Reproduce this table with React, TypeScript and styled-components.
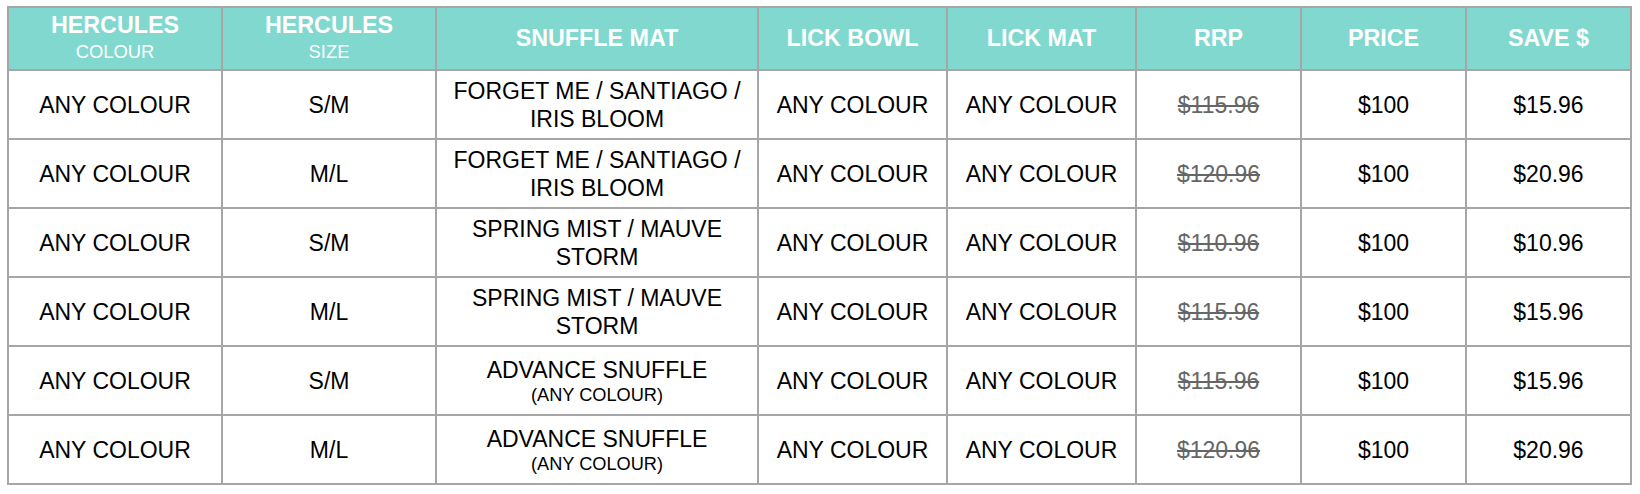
import React from "react";
import styled, { createGlobalStyle } from "styled-components";

const GlobalStyle = createGlobalStyle`
  html, body {
    margin: 0;
    padding: 0;
    background: #ffffff;
  }
  body {
    font-family: "Liberation Sans", Arial, Helvetica, sans-serif;
    color: #000000;
  }
`;

const Page = styled.div`
  padding: 6px 0 0 7px;
`;

const Table = styled.table`
  width: 1625px;
  table-layout: fixed;
  border-collapse: collapse;
  font-family: "Liberation Sans", Arial, Helvetica, sans-serif;
`;

const HeadRow = styled.tr`
  height: 63px;
  background: #81d8cf;
`;

const BodyRow = styled.tr`
  height: 69px;
  background: #ffffff;
`;

const HeadCell = styled.th`
  border: 2px solid #a6a6a6;
  padding: 0 10px;
  color: #ffffff;
  font-size: 23.3px;
  font-weight: 700;
  line-height: 26.4px;
  text-align: center;
  vertical-align: middle;
`;

const HeadSub = styled.span`
  display: block;
  font-size: 18.4px;
  font-weight: 400;
  line-height: 26.4px;
`;

const Cell = styled.td`
  border: 2px solid #a6a6a6;
  padding: 0 10px;
  font-size: 23px;
  line-height: 28px;
  text-align: center;
  vertical-align: middle;
  color: #000000;
`;

const Struck = styled.span`
  color: #666666;
  text-decoration: line-through;
`;

const Note = styled.div`
  font-size: 18.2px;
  line-height: 22px;
`;

type Row = {
  size: string;
  mat: string;
  note?: string;
  rrp: string;
  save: string;
};

const widths = [214, 214, 322, 189, 189, 165, 165, 165];

const headers: { title: string; sub?: string }[] = [
  { title: "HERCULES", sub: "COLOUR" },
  { title: "HERCULES", sub: "SIZE" },
  { title: "SNUFFLE MAT" },
  { title: "LICK BOWL" },
  { title: "LICK MAT" },
  { title: "RRP" },
  { title: "PRICE" },
  { title: "SAVE $" },
];

const rows: Row[] = [
  { size: "S/M", mat: "FORGET ME / SANTIAGO / IRIS BLOOM", rrp: "$115.96", save: "$15.96" },
  { size: "M/L", mat: "FORGET ME / SANTIAGO / IRIS BLOOM", rrp: "$120.96", save: "$20.96" },
  { size: "S/M", mat: "SPRING MIST / MAUVE STORM", rrp: "$110.96", save: "$10.96" },
  { size: "M/L", mat: "SPRING MIST / MAUVE STORM", rrp: "$115.96", save: "$15.96" },
  { size: "S/M", mat: "ADVANCE SNUFFLE", note: "(ANY COLOUR)", rrp: "$115.96", save: "$15.96" },
  { size: "M/L", mat: "ADVANCE SNUFFLE", note: "(ANY COLOUR)", rrp: "$120.96", save: "$20.96" },
];

export default function App() {
  return (
    <>
      <GlobalStyle />
      <Page>
        <Table>
          <colgroup>
            {widths.map((w, i) => (
              <col key={i} style={{ width: w }} />
            ))}
          </colgroup>
          <thead>
            <HeadRow>
              {headers.map((h, i) => (
                <HeadCell key={i}>
                  {h.title}
                  {h.sub && <HeadSub>{h.sub}</HeadSub>}
                </HeadCell>
              ))}
            </HeadRow>
          </thead>
          <tbody>
            {rows.map((r, i) => (
              <BodyRow key={i}>
                <Cell>ANY COLOUR</Cell>
                <Cell>{r.size}</Cell>
                <Cell>
                  {r.mat}
                  {r.note && <Note>{r.note}</Note>}
                </Cell>
                <Cell>ANY COLOUR</Cell>
                <Cell>ANY COLOUR</Cell>
                <Cell>
                  <Struck>{r.rrp}</Struck>
                </Cell>
                <Cell>$100</Cell>
                <Cell>{r.save}</Cell>
              </BodyRow>
            ))}
          </tbody>
        </Table>
      </Page>
    </>
  );
}
